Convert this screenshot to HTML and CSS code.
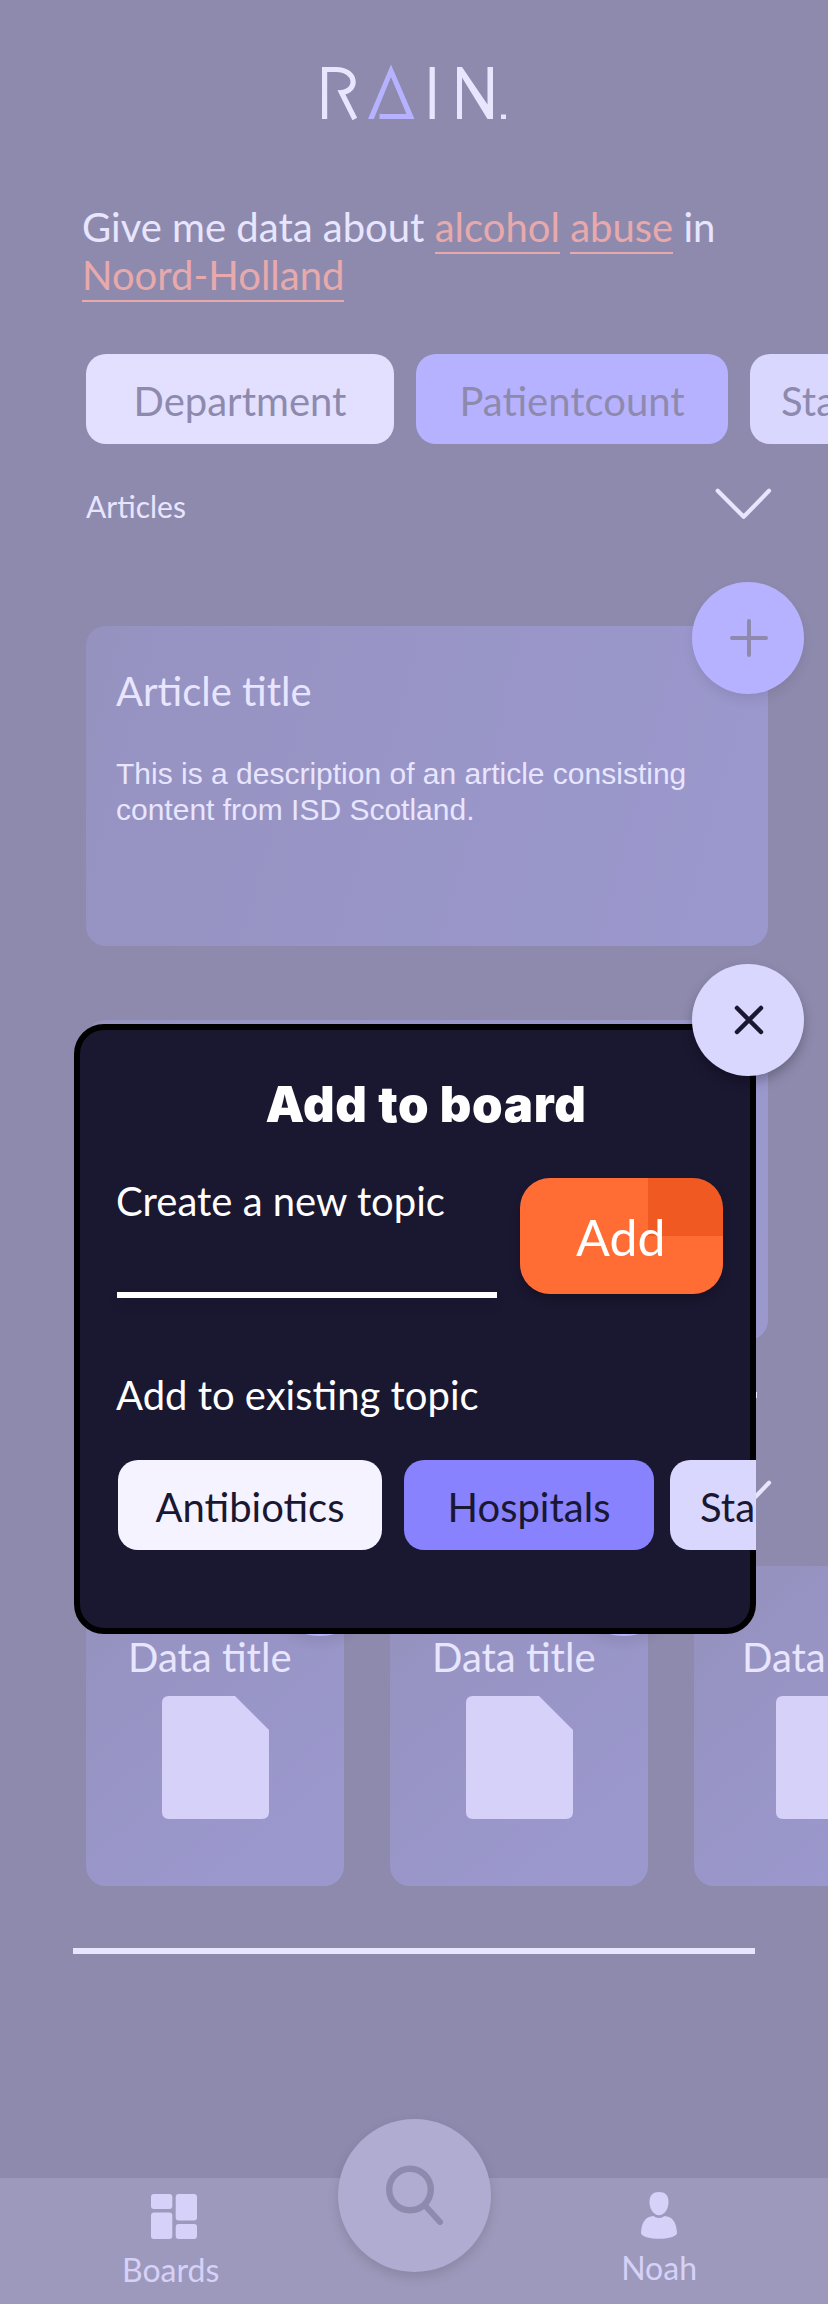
FILE: index.html
```
<!DOCTYPE html>
<html lang="en">
<head>
<meta charset="utf-8">
<title>Rain</title>
<link rel="stylesheet" href="styles.css">
</head>
<body>
<div class="page">
  <header class="header">
    <svg class="logo" width="190" height="64" viewBox="320 60 190 64" role="img" aria-label="RAIN.">
      <g fill="none" stroke="#e8e5ff" stroke-width="5.2">
        <path d="M324.600 119V69.500H336C357 69.500 358.500 91 341.500 92.500L354.800 119"/>
        <path d="M432.200 67V119"/>
      </g>
      <path fill="#e8e5ff" d="M457 67H462L487.500 104.500V67H493V119H487.500L462 77.500V119H457Z"/>
      <path fill="#e8e5ff" d="M501 114.500H506V119H501Z"/>
      <path fill="#b7b2ff" d="M368 119L391 64.500L414.500 119H379.500V114H406.500L391 77L373.800 119Z"/>
    </svg>
  </header>

  <p class="query">Give me data about <span class="term">alcohol</span> <span class="term">abuse</span> in <span class="term">Noord-Holland</span></p>

  <div class="chips">
    <span class="chip chip-pale">Department</span>
    <span class="chip chip-violet">Patientcount</span>
    <span class="chip chip-lilac">Sta</span>
  </div>

  <div class="section-head">
    <h2 class="section-title">Articles</h2>
    <svg class="chevron" width="60" height="34" viewBox="0 0 60 34"><path d="M5.700 3.800L31.700 29.800L57 3.800"/></svg>
  </div>

  <div class="articles">
    <article class="card">
      <h3 class="card-title">Article title</h3>
      <p class="card-text">This is a description of an article consisting content from ISD Scotland.</p>
      <span class="fab"><svg width="40" height="40" viewBox="0 0 40 40"><path d="M3 20H37M20 3V37"/></svg></span>
    </article>
    <article class="card"></article>
  </div>

  <hr class="rule rule-mid">

  <div class="section-head section-head-data">
    <svg class="chevron" width="60" height="34" viewBox="0 0 60 34"><path d="M5.700 3.800L31.700 29.800L57 3.800"/></svg>
  </div>

  <div class="data-row">
    <article class="data-card">
      <h3 class="data-title">Data title</h3>
      <svg class="doc" width="107" height="123" viewBox="0 0 107 123"><path d="M7 0H73L107 34V116Q107 123 100 123H7Q0 123 0 116V7Q0 0 7 0Z"/></svg>
      <span class="fab fab-data"></span>
    </article>
    <article class="data-card">
      <h3 class="data-title">Data title</h3>
      <svg class="doc" width="107" height="123" viewBox="0 0 107 123"><path d="M7 0H73L107 34V116Q107 123 100 123H7Q0 123 0 116V7Q0 0 7 0Z"/></svg>
      <span class="fab fab-data"></span>
    </article>
    <article class="data-card data-card-last">
      <h3 class="data-title">Data title</h3>
      <svg class="doc" width="107" height="123" viewBox="0 0 107 123"><path d="M7 0H73L107 34V116Q107 123 100 123H7Q0 123 0 116V7Q0 0 7 0Z"/></svg>
    </article>
  </div>

  <hr class="rule rule-bottom">

  <nav class="nav">
    <a class="nav-item nav-boards">
      <svg width="46" height="46" viewBox="0 0 46 46"><rect width="21.300" height="15" rx="3"/><rect y="18.500" width="21.300" height="26.500" rx="3"/><rect x="24.700" width="21.300" height="26.500" rx="3"/><rect x="24.700" y="30" width="21.300" height="15" rx="3"/></svg>
      <span>Boards</span>
    </a>
    <a class="nav-item nav-noah">
      <svg width="36" height="48" viewBox="0 0 36 48"><path d="M18 0C24 0 27.500 3 27.500 10C27.500 17 23.500 23.200 18 23.200C12.500 23.200 8.500 17 8.500 10C8.500 3 12 0 18 0Z"/><path d="M12.500 24C15.500 26.500 20.500 26.500 23.500 24C31 24.500 35.500 29.500 36 41.500C33 48.500 3 48.500 0 41.500C.5 29.500 5 24.500 12.500 24Z"/></svg>
      <span>Noah</span>
    </a>
    <span class="search"><svg width="60" height="62" viewBox="0 0 60 62"><circle cx="26" cy="27.500" r="20.800" stroke-width="6.400"/><path d="M41 43.500L56 60" stroke-width="6"/></svg></span>
  </nav>

  <section class="modal">
    <div class="modal-body">
      <h2 class="modal-title">Add to board</h2>
      <div class="create">
        <div class="field">
          <label class="label">Create a new topic</label>
          <div class="input-line"></div>
        </div>
        <button class="add">Add</button>
      </div>
      <p class="label label-existing">Add to existing topic</p>
      <div class="topics">
        <span class="chip topic-white">Antibiotics</span>
        <span class="chip topic-violet">Hospitals</span>
        <span class="chip topic-lilac">Sta</span>
      </div>
    </div>
    <span class="fab fab-close"><svg width="40" height="40" viewBox="0 0 40 40"><path d="M8 8L32 32M32 8L8 32"/></svg></span>
  </section>
</div>
</body>
</html>
```
FILE: styles.css
```
* { box-sizing: border-box; }
body { margin: 0; background: #8e8aae; }
h2, h3, p { margin: 0; font-weight: 400; }
svg { display: block; flex: none; overflow: visible; }

.page {
  position: relative;
  width: 828px;
  height: 2304px;
  overflow: hidden;
  display: flex;
  flex-direction: column;
  background: #8e8aae;
  color: #e8e5ff;
  font-family: Lato, "Liberation Sans", sans-serif;
  font-size: 40px;
  line-height: 48px;
}

.header { padding: 60px 0 0 320px; height: 203px; }

.query { height: 151px; padding-left: 82px; width: 740px; }
.term { color: #e8a9ac; padding-bottom: 1px; border-bottom: 2px solid #e8a9ac; }

.chips { display: flex; gap: 22px; padding-left: 86px; height: 90px; }
.chip {
  flex: none;
  height: 90px;
  line-height: 94px;
  border-radius: 20px;
  color: #8e8aae;
  text-align: center;
  white-space: nowrap;
}
.chip-pale { width: 308px; background: #e3e0ff; }
.chip-violet { width: 312px; background: #b7b2ff; }
.chip-lilac { width: 160px; padding-left: 31px; background: #dad7ff; text-align: left; }

.section-head { display: flex; justify-content: space-between; height: 182px; padding: 43px 56px 0 86px; }
.section-title { font-size: 30px; line-height: 36px; padding-top: 1px; }
.chevron { fill: none; stroke: #e8e5ff; stroke-width: 4.2; stroke-linecap: round; stroke-linejoin: round; }

.articles { display: flex; flex-direction: column; gap: 74px; padding-left: 86px; }
.card {
  position: relative;
  width: 682px;
  height: 320px;
  padding: 41px 60px 0 30px;
  border-radius: 20px;
  background: linear-gradient(105deg, #9692c0, #9b98ce);
}
.card-title { font-size: 40px; line-height: 48px; }
.card-text { margin-top: 41px; font: 30px/36px "Liberation Sans", sans-serif; }

.fab {
  position: absolute;
  top: -44px;
  left: 606px;
  width: 112px;
  height: 112px;
  display: flex;
  align-items: center;
  justify-content: center;
  border-radius: 50%;
  background: #b7b2ff;
  box-shadow: 0 6px 12px rgba(0, 0, 0, .08);
  fill: none;
  stroke: #8e8aae;
  stroke-width: 4;
  stroke-linecap: round;
}
.fab svg { margin-left: 2px; }

.rule { flex: none; height: 6px; width: 682px; margin: 0; border: 0; background: #e8e5ff; }
.rule-mid { margin: 52px 0 0 75px; }
.section-head-data { height: 168px; padding-top: 81px; justify-content: flex-end; }

.data-row { display: flex; gap: 46px; padding-left: 86px; }
.data-card {
  position: relative;
  flex: none;
  width: 258px;
  height: 320px;
  padding: 67px 0 0 42px;
  border-radius: 20px;
  background: linear-gradient(140deg, #9692c0 15%, #9b98ce 85%);
}
.data-card-last { padding-left: 48px; }
.doc { margin: 15px 0 0 34px; fill: #d6d1f8; }
.data-title { font-size: 40px; line-height: 48px; white-space: nowrap; }
.fab-data { top: -42px; left: 178px; }

.rule-bottom { margin: 62px 0 0 73px; }

.nav {
  position: relative;
  display: flex;
  justify-content: space-between;
  margin-top: auto;
  height: 126px;
  padding: 0 131px 0 122px;
  background: #9d99bc;
  color: #d6d1f8;
  fill: #d6d1f8;
}
.nav-item { display: flex; flex-direction: column; align-items: center; font-size: 32px; line-height: 38px; }
.nav-boards { padding-top: 16px; }
.nav-boards svg { margin-left: 6px; }
.nav-boards span { margin-top: 11px; }
.nav-noah { padding-top: 14px; }
.nav-noah span { margin-top: 9px; }
.search {
  position: absolute;
  left: 337.500px;
  top: -59px;
  width: 153px;
  height: 153px;
  display: flex;
  align-items: center;
  justify-content: center;
  border-radius: 50%;
  background: #afabd1;
  box-shadow: 0 5px 12px rgba(0, 0, 0, .13);
  fill: none;
  stroke: #8e8aae;
  stroke-linecap: round;
}
.search svg { margin-top: -5px; }

.modal { position: absolute; left: 74px; top: 1024px; width: 682px; height: 610px; }
.modal-body {
  height: 610px;
  border: 6px solid #000;
  border-radius: 30px;
  background: #1a1731;
  color: #fff;
  padding: 36px 0 0 36px;
}
.modal-title { width: 620px; height: 84px; padding-top: 9px; text-align: center; font: 900 49px/60px Inter, Lato, sans-serif; letter-spacing: .7px; }
.create { display: flex; height: 192px; }
.field { width: 404px; padding-top: 27px; }
.label { display: block; font-size: 40px; line-height: 48px; }
.input-line { width: 380px; height: 6px; margin: 67px 0 0 1px; background: #fff; box-shadow: 0 6px 12px rgba(0, 0, 0, .12); }
.add {
  width: 202.500px;
  height: 116px;
  margin-top: 28px;
  padding: 1px 1px 0 0;
  border: 0;
  border-radius: 30px;
  background: linear-gradient(#f05a22, #f05a22) 128px 0 / 75px 58px no-repeat, #ff6d35;
  box-shadow: 0 6px 10px rgba(0, 0, 0, .2);
  color: #fff;
  font: 50px/60px Lato, sans-serif;
}
.label-existing { margin-top: 29px; }
.topics { display: flex; width: 640px; overflow: hidden; margin-top: 41px; padding-left: 2px; }
.topics .chip { color: #1a1731; }
.topic-white { width: 264px; background: #f4f3ff; }
.topic-violet { width: 250px; margin-left: 22px; background: #8882ff; }
.topic-lilac { width: 86px; margin-left: 16px; padding-left: 30px; background: #dad7ff; }
.topics .topic-lilac { text-align: left; border-radius: 20px 0 0 20px; }
.fab-close { left: 618px; top: -60px; background: #dad7ff; stroke: #1a1731; stroke-width: 4.500; box-shadow: 0 6px 12px rgba(0, 0, 0, .25); }
```
